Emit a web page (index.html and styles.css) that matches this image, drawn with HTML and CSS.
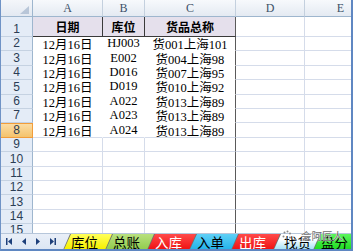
FILE: index.html
```html
<!DOCTYPE html>
<html lang="zh-CN">
<head>
<meta charset="utf-8">
<title>库位</title>
<link rel="stylesheet" href="styles.css">
</head>
<body>
<div class="window">
  <div class="sheet">
    <div class="grid">
      <div class="corner"><span class="tri"></span></div>
      <div class="ch">A</div><div class="ch">B</div><div class="ch">C</div><div class="ch">D</div><div class="ch">E</div>

      <div class="rh">1</div>
      <div class="c t1">日期</div><div class="c t1">库位</div><div class="c t1 cr">货品总称</div><div class="c"></div><div class="c"></div>

      <div class="rh">2</div>
      <div class="c w">12月16日</div><div class="c w">HJ003</div><div class="c w cr">货001上海101</div><div class="c"></div><div class="c"></div>
      <div class="rh">3</div>
      <div class="c w">12月16日</div><div class="c w">E002</div><div class="c w cr">货004上海98</div><div class="c"></div><div class="c"></div>
      <div class="rh">4</div>
      <div class="c w">12月16日</div><div class="c w">D016</div><div class="c w cr">货007上海95</div><div class="c"></div><div class="c"></div>
      <div class="rh">5</div>
      <div class="c w">12月16日</div><div class="c w">D019</div><div class="c w cr">货010上海92</div><div class="c"></div><div class="c"></div>
      <div class="rh">6</div>
      <div class="c w">12月16日</div><div class="c w">A022</div><div class="c w cr">货013上海89</div><div class="c"></div><div class="c"></div>
      <div class="rh">7</div>
      <div class="c w">12月16日</div><div class="c w">A023</div><div class="c w cr">货013上海89</div><div class="c"></div><div class="c"></div>
      <div class="rh sel">8</div>
      <div class="c w last">12月16日</div><div class="c w last">A024</div><div class="c w last cr">货013上海89</div><div class="c"></div><div class="c"></div>

      <div class="rh">9</div><div class="c"></div><div class="c"></div><div class="c cr"></div><div class="c"></div><div class="c"></div>
      <div class="rh">10</div><div class="c"></div><div class="c"></div><div class="c cr"></div><div class="c"></div><div class="c"></div>
      <div class="rh">11</div><div class="c"></div><div class="c"></div><div class="c cr"></div><div class="c"></div><div class="c"></div>
      <div class="rh">12</div><div class="c"></div><div class="c"></div><div class="c cr"></div><div class="c"></div><div class="c"></div>
      <div class="rh">13</div><div class="c"></div><div class="c"></div><div class="c cr"></div><div class="c"></div><div class="c"></div>
      <div class="rh">14</div><div class="c"></div><div class="c"></div><div class="c cr"></div><div class="c"></div><div class="c"></div>
      <div class="rh">15</div><div class="c"></div><div class="c"></div><div class="c cr"></div><div class="c"></div><div class="c"></div>
    </div>
  </div>

  <div class="tabbar">
    <div class="nav">
      <svg width="60" height="16" viewBox="0 0 60 16">
        <g fill="#1d3f7a">
          <rect x="5" y="4" width="1.5" height="7"/>
          <polygon points="7,7.5 11,4 11,11"/>
          <polygon points="21,7.5 25,4 25,11"/>
          <polygon points="39,7.5 35,4 35,11"/>
          <polygon points="53,7.5 49,4 49,11"/>
          <rect x="53.5" y="4" width="1.5" height="7"/>
        </g>
      </svg>
    </div>
    <div class="tabs">
      <div class="tab yellow">库位</div>
      <div class="tab green">总账</div>
      <div class="tab red">入库</div>
      <div class="tab blue">入单</div>
      <div class="tab red">出库</div>
      <div class="tab active">找货</div>
      <div class="tab lime">盘分</div>
    </div>
    <div class="mark">
      <svg width="10" height="11" viewBox="0 0 10 11">
        <g fill="#8a8a8a">
          <circle cx="2.5" cy="2.5" r="1"/><circle cx="5.5" cy="1.5" r="1"/><circle cx="8" cy="3.5" r="1"/>
          <circle cx="1.5" cy="6.5" r="1"/><circle cx="4.5" cy="8.5" r="1"/><circle cx="8" cy="7.5" r="1"/>
        </g>
      </svg>
      <span>会阿匠人</span>
    </div>
  </div>
</div>
</body>
</html>
```

FILE: styles.css
```css
html, body {
  margin: 0;
  padding: 0;
  background: #ffffff;
}

.window {
  position: relative;
  width: 353px;
  height: 251px;
  box-sizing: border-box;
  border-left: 1px solid #6f93c6;
  border-right: 2px solid #5f87c2;
  border-bottom: 2px solid #5f87c2;
  overflow: hidden;
  display: flex;
  flex-direction: column;
}

.sheet {
  height: 233px;
  overflow: hidden;
  flex: none;
}

.grid {
  display: grid;
  grid-template-columns: 32px 70px 42px 91px 69px 72px;
  grid-template-rows: 17px 20px;
  grid-auto-rows: 14.4px;
}

.corner {
  position: relative;
  background: linear-gradient(#f4f6fa, #e3e9f2);
  border-right: 1px solid #9eb6ce;
  border-bottom: 1px solid #9eb6ce;
  box-sizing: border-box;
}

.tri {
  position: absolute;
  right: 3px;
  bottom: 2px;
  width: 0;
  height: 0;
  border-left: 9px solid transparent;
  border-bottom: 8px solid #b8c6d8;
}

.ch {
  background: linear-gradient(#f7f9fc, #e4eaf2);
  border-right: 1px solid #c4d0de;
  border-bottom: 1px solid #9eb6ce;
  box-sizing: border-box;
  display: flex;
  align-items: center;
  justify-content: center;
  font: 12px "Liberation Serif", serif;
  color: #3d5168;
}

.rh {
  background: #e4ecf7;
  border-right: 1px solid #9eb6ce;
  border-bottom: 1px solid #c5d2e2;
  box-sizing: border-box;
  display: flex;
  align-items: flex-end;
  justify-content: center;
  font: 12px "Liberation Sans", Arial, sans-serif;
  color: #2b3d55;
  line-height: 13px;
}

.rh.sel {
  background: linear-gradient(#fbdca4, #f4c36c);
  border-top: 1px solid #f29d3a;
  border-right: 1px solid #f29d3a;
  border-bottom: 1px solid #f29d3a;
}

.c {
  border-right: 1px solid #d5dcea;
  border-bottom: 1px solid #d5dcea;
  box-sizing: border-box;
  display: flex;
  align-items: center;
  justify-content: center;
  white-space: nowrap;
  font: 12.5px "Liberation Serif", "Noto Sans CJK SC", serif;
  color: #000;
  overflow: hidden;
}

.c.t1 {
  background: #e5e0ec;
  border-right: 1px solid #3a3a3a;
  border-bottom: 1px solid #3a3a3a;
  font: bold 12px "Noto Sans CJK SC", sans-serif;
}

.c.w {
  border-right-color: #ffffff;
  border-bottom-color: #ffffff;
}

.c.w.last {
  border-bottom-color: #d5dcea;
}

.c.cr {
  border-right: 1px solid #5a5a5a;
}

/* tab bar */
.tabbar {
  position: relative;
  flex: 1;
  display: flex;
  align-items: stretch;
  background: linear-gradient(#e9eff8, #dbe5f3);
  border-top: 1px solid #b6c6da;
}

.nav {
  width: 60px;
  flex: none;
  display: flex;
  align-items: center;
}

.tabs {
  display: flex;
  align-items: stretch;
  padding-left: 9px;
}

.tab {
  position: relative;
  width: 49px;
  margin-left: -7px;
  display: flex;
  align-items: center;
  justify-content: flex-start;
  padding-left: 8px;
  background: #707070;
  clip-path: polygon(7px 0, 100% 0, 100% 100%, 0 100%);
  font: 13.5px "Noto Sans CJK SC", sans-serif;
  line-height: 14px;
  color: #000;
  box-sizing: border-box;
}

.tab::before {
  content: "";
  position: absolute;
  inset: 0 0 1px 0;
  background: var(--bg);
  clip-path: polygon(8px 0, 100% 0, 100% 100%, 1.2px 100%);
  z-index: -1;
}

.tab.yellow { --bg: linear-gradient(#ffff5a, #f6f000); }
.tab.green { --bg: linear-gradient(#b8e07e, #92cd4f); }
.tab.red { --bg: linear-gradient(#ff4a4a, #f01414); color: #ffffff; }
.tab.blue { --bg: linear-gradient(#5fd0f6, #25b4ea); }
.tab.active { --bg: linear-gradient(#ffffff 35%, #a6e2f6); width: 47px; padding-left: 11px; }
.tab.lime { --bg: linear-gradient(#5cf55c, #21dd21); width: 44px; }

.mark {
  position: absolute;
  left: 281px;
  top: -6px;
  display: flex;
  align-items: center;
  gap: 9px;
  font: 10.5px "Noto Sans CJK SC", sans-serif;
  color: #6d6d6d;
  text-shadow: 0 0 1px #ffffff, 0 0 1px #ffffff;
}
```
